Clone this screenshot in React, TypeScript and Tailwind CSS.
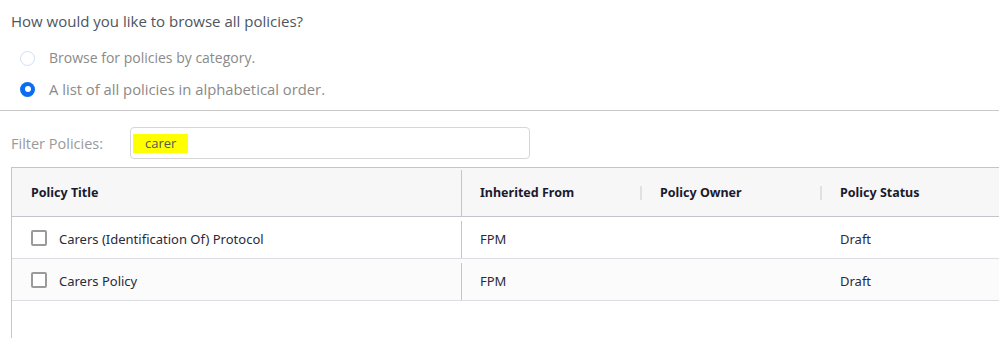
import React from "react";

const rows = [
  { title: "Carers (Identification Of) Protocol", from: "FPM", owner: "", status: "Draft" },
  { title: "Carers Policy", from: "FPM", owner: "", status: "Draft" },
];

export default function App() {
  return (
    <div className="h-[338px] w-[999px] overflow-hidden bg-white font-['Open_Sans',sans-serif]">
      <div className="px-[11px] pt-[11px]">
        <p className="text-[15px] leading-[20px] text-[#4d5560]">How would you like to browse all policies?</p>
        <div className="mt-[17px] flex flex-col gap-[11px] pl-[9px]">
          <label className="flex items-center gap-[14px] text-[14px] leading-[20px] text-[#8a8a8a]">
            <span className="h-[15px] w-[15px] rounded-full border border-[#cfe0f5] bg-white" />
            Browse for policies by category.
          </label>
          <label className="flex items-center gap-[14px] text-[14.8px] leading-[20px] text-[#8a8a8a]">
            <span className="flex h-[15px] w-[15px] items-center justify-center rounded-full bg-[#0a6cf0]">
              <span className="h-[6px] w-[6px] rounded-full bg-white" />
            </span>
            A list of all policies in alphabetical order.
          </label>
        </div>
      </div>

      <div className="mt-[11px] border-t border-[#c9c9c9]" />

      <div className="flex items-center pl-[11px] pt-[16px]">
        <span className="w-[119px] pt-[2px] text-[14.5px] text-[#9a9a9a]">Filter Policies:</span>
        <div className="flex h-[32px] w-[400px] items-center rounded-[4px] border border-[#d6d6d6] px-[2px]">
          <span className="bg-[#ffff00] px-[12px] py-[1px] text-[13px] leading-[17px] text-[#555]">carer</span>
        </div>
      </div>

      <div className="ml-[11px] mt-[8px] h-[200px] border-l border-t border-[#c3c5cc] font-['Noto_Sans',sans-serif]">
        <div className="grid h-[49px] grid-cols-[450px_180px_180px_1fr] items-center border-b border-[#c3c5cc] bg-[#f7f7f7] pt-[2px] text-[12.5px] font-bold text-[#1a1a2e]">
          <div className="flex h-full items-center border-r border-[#c3c5cc] pl-[19px]">Policy Title</div>
          <div className="flex items-center justify-between pl-[18px]">
            <span>Inherited From</span>
            <span className="h-[14px] w-[2px] bg-[#e0e1e5]" />
          </div>
          <div className="flex items-center justify-between pl-[18px]">
            <span>Policy Owner</span>
            <span className="h-[14px] w-[2px] bg-[#e0e1e5]" />
          </div>
          <div className="pl-[18px]">Policy Status</div>
        </div>
        {rows.map((r, i) => (
          <div
            key={i}
            className={`grid h-[42px] grid-cols-[450px_180px_180px_1fr] items-center border-b border-[#dcdde3] pt-[4px] text-[13px] text-[#2a2a3a] ${i % 2 === 1 ? "bg-[#fbfbfb]" : "bg-white"}`}
          >
            <div className="flex h-full items-center gap-[12px] border-r border-[#c3c5cc] pl-[19px]">
              <span className="-mt-[4px] h-[16px] w-[16px] rounded-[2px] border-2 border-[#9a9a9a] bg-white" />
              {r.title}
            </div>
            <div className="pl-[18px]">{r.from}</div>
            <div className="pl-[18px]">{r.owner}</div>
            <div className="pl-[18px]">{r.status}</div>
          </div>
        ))}
      </div>
    </div>
  );
}
